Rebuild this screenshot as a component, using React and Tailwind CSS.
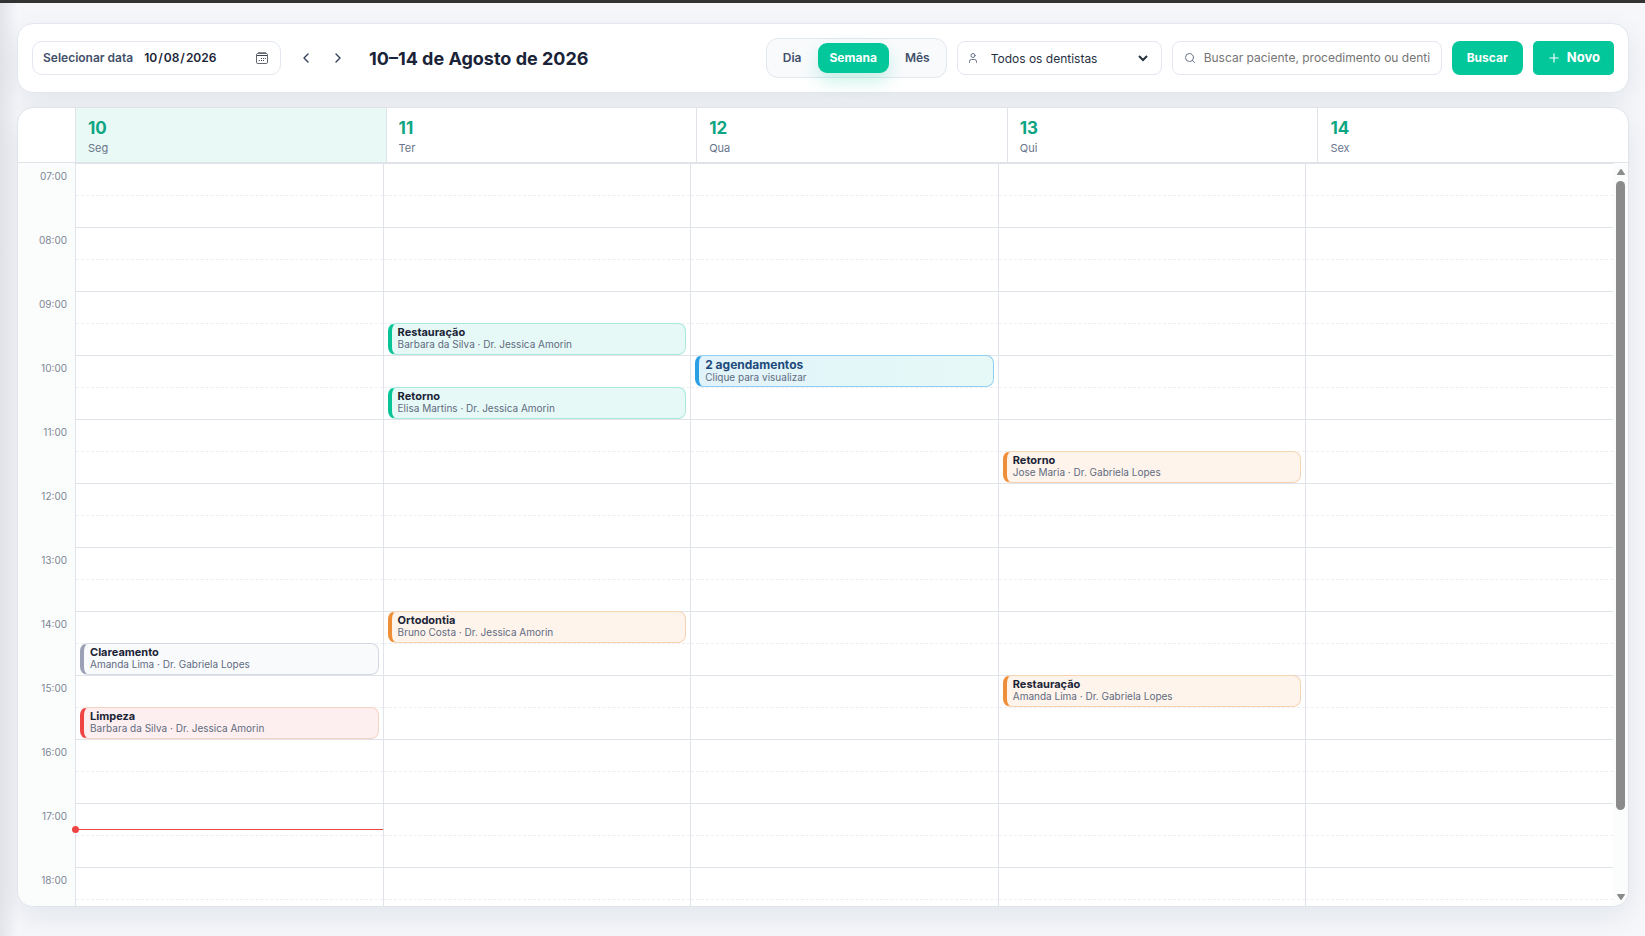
import { useState } from 'react';
import { ChevronLeft, ChevronRight, Plus, Search, User } from 'lucide-react';

const HOURS = [7, 8, 9, 10, 11, 12, 13, 14, 15, 16, 17, 18];
const START_HOUR = 7;
const HOUR_HEIGHT = 64;
const NOW = 17.41;

const TONES = {
  green: 'border-[#a9e8da] border-l-[#08c497] bg-[#e6f9f6]',
  orange: 'border-[#f6d2b3] border-l-[#ef8e38] bg-[#fef4ec]',
  gray: 'border-[#d5d9e2] border-l-[#9aa1b5] bg-[#f9fafc]',
  red: 'border-[#f6d2c0] border-l-[#ee4444] bg-[#fdefef]',
  blue: 'border-[#8fd0f2] border-l-[#2b9fe3] bg-linear-to-r from-[#e1f3fa] to-[#e6f9f6]',
};

const DAYS = [
  {
    number: 10,
    name: 'Seg',
    today: true,
    events: [
      { start: 14.5, title: 'Clareamento', detail: 'Amanda Lima · Dr. Gabriela Lopes', tone: 'gray' },
      { start: 15.5, title: 'Limpeza', detail: 'Barbara da Silva · Dr. Jessica Amorin', tone: 'red' },
    ],
  },
  {
    number: 11,
    name: 'Ter',
    events: [
      { start: 9.5, title: 'Restauração', detail: 'Barbara da Silva · Dr. Jessica Amorin', tone: 'green' },
      { start: 10.5, title: 'Retorno', detail: 'Elisa Martins · Dr. Jessica Amorin', tone: 'green' },
      { start: 14, title: 'Ortodontia', detail: 'Bruno Costa · Dr. Jessica Amorin', tone: 'orange' },
    ],
  },
  {
    number: 12,
    name: 'Qua',
    events: [{ start: 10, title: '2 agendamentos', detail: 'Clique para visualizar', tone: 'blue', group: true }],
  },
  {
    number: 13,
    name: 'Qui',
    events: [
      { start: 11.5, title: 'Retorno', detail: 'Jose Maria · Dr. Gabriela Lopes', tone: 'orange' },
      { start: 15, title: 'Restauração', detail: 'Amanda Lima · Dr. Gabriela Lopes', tone: 'orange' },
    ],
  },
  { number: 14, name: 'Sex', events: [] },
];

// Grid row of a given time, two rows per hour
const slotRow = (time) => (time - START_HOUR) * 2 + 1;

function CalendarIcon() {
  return (
    <svg width="12" height="12" viewBox="0 0 12 12" fill="none" stroke="#3c434d" aria-hidden="true">
      <path d="M2 0.5h8" strokeOpacity="0.6" />
      <rect x="0.5" y="1.5" width="11" height="10" rx="1.2" strokeOpacity="0.8" />
      <path d="M1 3.5h10" />
      <path d="M5 6.5h1M7 6.5h1M8.8 6.5h1M2.8 8.5h1M5 8.5h1M7 8.5h1" />
    </svg>
  );
}

function Toolbar() {
  const [date, setDate] = useState('2026-10-08');
  const [view, setView] = useState('Semana');
  const [query, setQuery] = useState('');

  return (
    <header className="flex h-[70px] shrink-0 items-center rounded-2xl border border-[#e2e7f0] bg-white px-[14px] shadow-[0_10px_30px_rgba(15,23,42,0.08)]">
      <div className="flex h-[34px] w-[249px] shrink-0 items-center rounded-[10px] border border-[#e2e7f0] px-[10px]">
        <label htmlFor="date" className="whitespace-nowrap text-[12px] font-semibold text-[#42506a]">
          Selecionar data
        </label>
        <input
          id="date"
          type="date"
          value={date}
          onChange={(e) => setDate(e.target.value)}
          className="ml-[10px] min-w-0 flex-1 bg-transparent text-[12px] font-semibold text-[#1b2436] outline-none [&::-webkit-calendar-picker-indicator]:hidden"
        />
        <button
          type="button"
          aria-label="Abrir calendário"
          onClick={() => document.getElementById('date').showPicker()}
          className="mr-[2px]"
        >
          <CalendarIcon />
        </button>
      </div>

      <div className="ml-[9px] flex shrink-0">
        <button type="button" aria-label="Semana anterior" className="flex size-8 items-center justify-center text-[#33415c]">
          <ChevronLeft size={16} />
        </button>
        <button type="button" aria-label="Próxima semana" className="flex size-8 items-center justify-center text-[#33415c]">
          <ChevronRight size={16} />
        </button>
      </div>

      <h1 className="ml-[15px] whitespace-nowrap text-[18px] font-bold text-[#1a2338]">10–14 de Agosto de 2026</h1>

      <div className="ml-auto flex items-center gap-[10px]">
        <div className="flex h-10 items-center gap-1 rounded-xl border border-[#e2e7f0] bg-[#f9fafc] px-1">
          {['Dia', 'Semana', 'Mês'].map((name) => (
            <button
              key={name}
              type="button"
              onClick={() => setView(name)}
              className={`h-[30px] rounded-[9px] px-3 text-[12px] ${
                view === name
                  ? 'bg-[#02c79a] font-bold text-white shadow-[0_8px_18px_rgba(2,199,154,0.22)]'
                  : 'font-semibold text-[#42506a]'
              }`}
            >
              {name}
            </button>
          ))}
        </div>

        <div className="flex h-[34px] w-[205px] items-center rounded-lg border border-[#e2e7f0] pl-[9px] pr-[10px]">
          <User size={12} className="shrink-0 text-[#66728a]" />
          <select aria-label="Dentista" className="ml-2 h-8 min-w-0 flex-1 bg-transparent text-[12px] text-[#27303f] outline-none">
            <option>Todos os dentistas</option>
            <option>Dr. Gabriela Lopes</option>
            <option>Dr. Jessica Amorin</option>
          </select>
        </div>

        <div className="flex h-[34px] w-[270px] items-center rounded-lg border border-[#e2e7f0] px-[11px]">
          <Search size={12} className="shrink-0 text-[#66728a]" />
          <input
            type="text"
            aria-label="Buscar"
            value={query}
            onChange={(e) => setQuery(e.target.value)}
            placeholder="Buscar paciente, procedimento ou dentista"
            className="ml-2 min-w-0 flex-1 bg-transparent text-[12px] text-[#27303f] outline-none placeholder:text-[#757575]"
          />
        </div>

        <button type="button" className="h-[34px] rounded-lg bg-[#02c79a] px-[15px] text-[12px] font-bold text-white">
          Buscar
        </button>
        <button type="button" className="flex h-[34px] items-center gap-[6px] rounded-[5px] bg-[#02c79a] px-[14px] text-[13px] font-bold text-white">
          <Plus size={14} />
          Novo
        </button>
      </div>
    </header>
  );
}

function EventCard({ event }) {
  return (
    <button
      type="button"
      style={{ gridRow: slotRow(event.start), gridColumn: 1 }}
      className={`z-10 mx-1 flex flex-col overflow-hidden rounded-lg border border-l-4 pl-[6px] text-left leading-3 ${
        event.group ? 'pt-[3px]' : 'pt-[2px]'
      } ${TONES[event.tone]}`}
    >
      <span className={`font-bold ${event.group ? 'text-[12px] text-[#1d4a7c]' : 'text-[11px] text-[#1b2436]'}`}>
        {event.title}
      </span>
      <span className="text-[10px] text-[#5f6b80]">{event.detail}</span>
    </button>
  );
}

function DayColumn({ day }) {
  return (
    <div className="relative grid min-w-0 flex-1 auto-rows-[32px] border-l border-[#e0e3ea]">
      {HOURS.flatMap((hour) => [
        <div key={hour} style={{ gridRow: slotRow(hour), gridColumn: 1 }} className="border-t border-[#e0e3ea]" />,
        <div
          key={`${hour}-half`}
          style={{ gridRow: slotRow(hour) + 1, gridColumn: 1 }}
          className="border-t border-dashed border-[#eceef2]"
        />,
      ])}
      {day.events.map((event) => (
        <EventCard key={event.start} event={event} />
      ))}
      {day.today && (
        <div
          style={{ top: Math.round((NOW - START_HOUR) * HOUR_HEIGHT) }}
          className="absolute -left-1 right-0 z-20 flex h-px items-center bg-[#ee4444]"
        >
          <span className="size-[7px] shrink-0 rounded-full bg-[#ee4444]" />
        </div>
      )}
    </div>
  );
}

function Scrollbar() {
  return (
    <div aria-hidden="true" className="flex w-[15px] shrink-0 flex-col items-center bg-[#fbfdfd] py-[6px]">
      <svg width="8" height="6" viewBox="0 0 8 6" fill="#8b8b8b">
        <path d="M3.2 0.5Q4-0.4 4.8 0.5L7.8 5Q8.2 6 7.2 6H0.8Q-0.2 6 0.2 5z" />
      </svg>
      <div className="my-[6px] w-[9px] flex-1">
        <div className="h-[89%] rounded-full bg-[#8b8b8b]" />
      </div>
      <svg width="8" height="6" viewBox="0 0 8 6" fill="#8b8b8b">
        <path d="M3.2 5.5Q4 6.4 4.8 5.5L7.8 1Q8.2 0 7.2 0H0.8Q-0.2 0 0.2 1z" />
      </svg>
    </div>
  );
}

function WeekCalendar() {
  return (
    <section className="flex min-h-0 flex-1 flex-col overflow-hidden rounded-2xl border border-[#dfe3ea] bg-white shadow-[0_10px_30px_rgba(15,23,42,0.08)]">
      <div className="flex shrink-0 border-b border-[#e0e3ea]">
        <div className="w-[57px] shrink-0" />
        {DAYS.map((day) => (
          <div
            key={day.number}
            className={`min-w-0 flex-1 border-l border-[#e0e3ea] px-3 pt-2 pb-[6px] ${day.today ? 'bg-[#e9faf6]' : ''}`}
          >
            <div className="text-[17px] font-bold leading-6 text-[#0ea582]">{day.number}</div>
            <div className="text-[11px] leading-4 text-[#68748a]">{day.name}</div>
          </div>
        ))}
      </div>

      <div className="flex min-h-0 flex-1">
        <div className="flex min-w-0 flex-1 overflow-y-auto [scrollbar-width:none]">
          <div className="h-[768px] w-[57px] shrink-0 bg-[#fbfdfd]">
            {HOURS.map((hour) => (
              <div key={hour} className="h-16 pt-[6px] pr-2 text-right text-[10px] leading-[14px] text-[#7b8594]">
                {String(hour).padStart(2, '0')}:00
              </div>
            ))}
          </div>
          <div className="flex h-[768px] min-w-0 flex-1">
            {DAYS.map((day) => (
              <DayColumn key={day.number} day={day} />
            ))}
          </div>
        </div>
        <Scrollbar />
      </div>
    </section>
  );
}

export default function App() {
  return (
    <div className="flex h-screen flex-col border-t-[3px] border-[#333333] bg-[#f5f7fb] font-['Inter',sans-serif]">
      <main className="flex min-h-0 flex-1 flex-col gap-[14px] bg-linear-to-r from-[#e2e4e9] to-transparent bg-[length:18px_100%] bg-no-repeat pt-5 pr-4 pb-[29px] pl-[17px]">
        <Toolbar />
        <WeekCalendar />
      </main>
    </div>
  );
}
